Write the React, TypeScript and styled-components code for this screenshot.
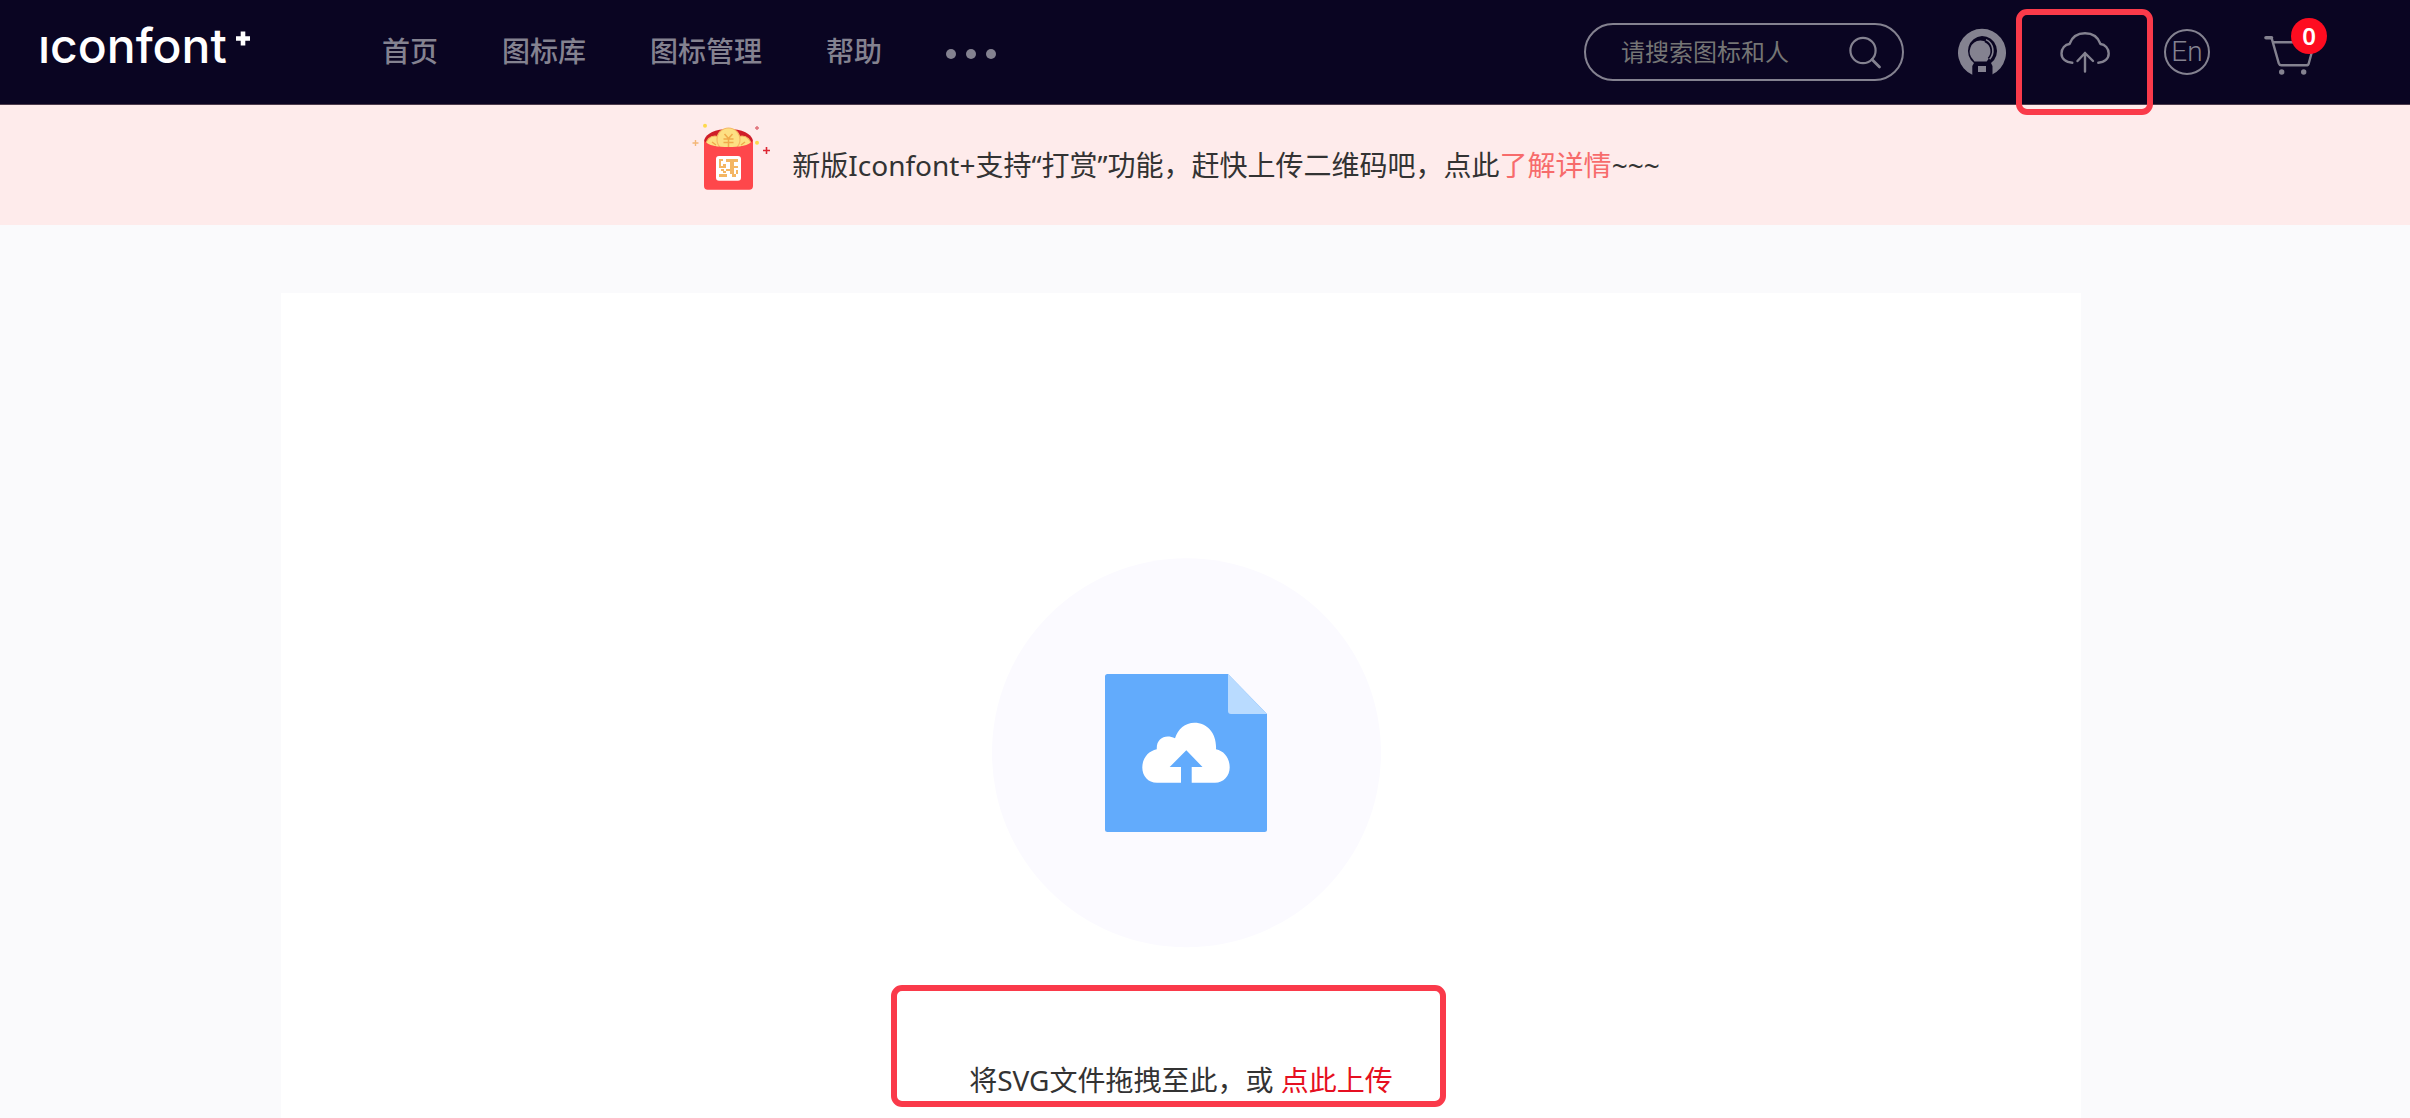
import React from 'react';
import styled, { createGlobalStyle } from 'styled-components';

const GlobalStyle = createGlobalStyle`
  *, *::before, *::after { box-sizing: border-box; }
  body {
    margin: 0;
    background: #fafafc;
    color: #333;
    font-family: "Noto Sans", "Noto Sans CJK SC", sans-serif;
    font-size: 28px;
    line-height: 40px;
  }
  button, input { font-family: inherit; }
  a { text-decoration: none; }
`;

const Page = styled.div`
  display: flex;
  flex-direction: column;
  min-height: 100vh;
`;

const Header = styled.header`
  display: flex;
  align-items: center;
  height: 105px;
  padding: 0 83px 0 38px;
  background: #0a0522;
  border-bottom: 1px solid #4d3c4c;
`;

const Logo = styled.a`
  display: flex;
  align-items: center;
  gap: 8px;
  width: 344px;
  padding-bottom: 12px;
  color: #fff;
  font-family: Inter, sans-serif;
  font-size: 48px;
  font-weight: 500;
  line-height: 60px;
`;

const Nav = styled.nav`
  display: flex;
  align-items: center;
  gap: 64px;
  flex: 1;
  padding-bottom: 2px;
`;

const NavLink = styled.a`
  color: #848290;
  font-weight: 500;
  white-space: nowrap;
`;

const MoreButton = styled.button`
  display: flex;
  gap: 10px;
  padding: 5px 0 0;
  border: 0;
  background: none;
`;

const Dot = styled.span`
  width: 10px;
  height: 10px;
  border-radius: 50%;
  background: #848290;
`;

const Tools = styled.div`
  display: flex;
  align-items: center;
  gap: 54px;
  color: #848290;
`;

const SearchBox = styled.form`
  display: flex;
  align-items: center;
  width: 320px;
  height: 58px;
  padding: 0 20px 0 35px;
  border: 2px solid #848290;
  border-radius: 29px;
`;

const SearchInput = styled.input`
  flex: 1;
  min-width: 0;
  padding: 0;
  border: 0;
  outline: 0;
  background: none;
  color: #fff;
  font-size: 24px;
  line-height: 36px;
  &::placeholder { color: #757575; opacity: 1; }
`;

const IconButton = styled.button`
  display: flex;
  position: relative;
  padding: 0;
  border: 0;
  background: none;
  color: inherit;
`;

const LanguageButton = styled.button`
  display: flex;
  align-items: center;
  justify-content: center;
  width: 46px;
  height: 46px;
  padding: 0;
  border: 2px solid currentColor;
  border-radius: 50%;
  background: none;
  color: inherit;
  font-family: Roboto, sans-serif;
  font-size: 28px;
  font-weight: 300;
  line-height: 28px;
`;

const Badge = styled.span`
  position: absolute;
  top: -10px;
  right: 0;
  width: 36px;
  height: 36px;
  border-radius: 50%;
  background: #fe0c20;
  color: #fff;
  font-size: 24px;
  font-weight: 600;
  line-height: 36px;
  text-align: center;
`;

const Highlight = styled.span<{ $inset: string }>`
  position: absolute;
  inset: ${(p) => p.$inset};
  border: 6px solid #fa3a4a;
  border-radius: 11px;
  pointer-events: none;
`;

const Notice = styled.aside`
  display: flex;
  align-items: center;
  justify-content: center;
  gap: 22px;
  height: 120px;
  padding-right: 58px;
  background: #feebeb;
`;

const NoticeText = styled.p`
  margin: 0;
`;

const NoticeLink = styled.a`
  color: #f76b6b;
`;

const Main = styled.main`
  display: flex;
  flex: 1;
  justify-content: center;
  padding: 68px 48px 0 0;
`;

const UploadCard = styled.section`
  display: flex;
  flex-direction: column;
  align-items: center;
  flex: 1;
  max-width: 1800px;
  padding-top: 265px;
  background: #fff;
`;

const Prompt = styled.p`
  position: relative;
  margin: 112px 0 0;
`;

const UploadLink = styled.button`
  padding: 0;
  border: 0;
  background: none;
  color: #e60f21;
  font-size: inherit;
  line-height: inherit;
`;

const LogoPlus = () => (
  <svg width="16" height="30" viewBox="0 0 16 30" aria-hidden="true">
    <path d="M8 0.5v14M1 7.5h14" stroke="#fff" strokeWidth="4.6" />
  </svg>
);

const SearchIcon = () => (
  <svg width="34" height="34" viewBox="0 0 34 34" fill="none" stroke="#848290" strokeLinecap="round">
    <circle cx="15" cy="15.5" r="12.6" strokeWidth="2.2" />
    <path d="M24 24.5L31.5 32" strokeWidth="2.8" />
  </svg>
);

const AvatarIcon = () => (
  <svg width="48" height="48" viewBox="0 0 48 48">
    <path d="M14.3 46.7A24 24 0 1 1 33.7 46.7Z" fill="currentColor" />
    <path
      d="M24 8a15 15 0 0 1 9 27l1.5 3v10H14.3V38l1.7-3A15 15 0 0 1 24 8Z"
      fill="#0a0522"
    />
    <path d="M22.3 12.6a11 11 0 0 1 8 18.6l-1.6 2.4H16.4L15 31.4a11 11 0 0 1 7.3-18.8Z" fill="currentColor" />
    <path d="M27 13.4c7 3 8 12 3.4 17" fill="none" stroke="#0a0522" strokeWidth="1.6" />
    <path d="M28 11.6c8.3 4 8.6 14 3.6 19.5" fill="none" stroke="currentColor" strokeWidth="1.6" />
    <rect x="20" y="38" width="8" height="6" fill="currentColor" />
  </svg>
);

const CloudIcon = () => (
  <svg width="50" height="48" viewBox="0 0 50 48" fill="none" stroke="currentColor" strokeWidth="2.4" strokeLinecap="round" strokeLinejoin="round">
    <path d="M12.3 34.7C5.5 34.7 1.5 30.5 1.5 25.5c0-5 3.5-9 8-9.5C12 9 18 5.3 25 5.3S38 9 40.5 16c4.5.5 8.2 4.5 8.2 9.5 0 5-4 9.2-10.4 9.2" />
    <path d="M25 25v18.5M17.5 33l7.5-8 8 8" />
  </svg>
);

const CartIcon = () => (
  <svg width="63" height="48" viewBox="0 0 63 48" fill="none" stroke="currentColor" strokeLinecap="round" strokeLinejoin="round">
    <path d="M2 9.7h5.5" strokeWidth="3.6" />
    <path d="M7.5 9.7l7.3 25.7q.6 1.9 2.6 1.9h24.8q2 0 2.600-2L50.5 14.3H9" strokeWidth="2.4" />
    <circle cx="17.7" cy="44" r="2.7" fill="currentColor" stroke="none" />
    <circle cx="39.7" cy="44" r="2.7" fill="currentColor" stroke="none" />
  </svg>
);

const RedPacket = () => (
  <svg width="78" height="88" viewBox="0 0 78 88" aria-hidden="true">
    <g transform="translate(0 1)">
      <path d="M12 20C12 2.5 61 2.5 61 20v8H12Z" fill="#cf1d28" />
      <circle cx="23" cy="23" r="9" fill="#fde083" stroke="#f6b964" strokeWidth="1.2" />
      <circle cx="50" cy="23" r="9" fill="#fde083" stroke="#f6b964" strokeWidth="1.2" />
      <path d="M20 20l4 3M19 25h5M53 20l-4 3M54 25h-5" stroke="#f0aa4b" strokeWidth="1.4" />
      <circle cx="36.5" cy="17.5" r="11.5" fill="#fde083" stroke="#f6b964" strokeWidth="1.2" />
      <path d="M32.5 12l4 4.500 4-4.500M31.5 17h10M31.5 20.500h10M36.5 16.500V25" fill="none" stroke="#f0aa4b" strokeWidth="1.5" />
      <path d="M12 18.5C16 24 26 25 36.5 25S57 24 61 18.5V64a3.7 3.7 0 0 1-3.7 3.7H15.7A3.7 3.7 0 0 1 12 64Z" fill="#fe474b" />
      <rect x="24" y="34" width="25" height="24.7" rx="3" fill="#fff" />
      <path
        d="M27 37h4v2h-4zM27 39h2v5h5v2h-7zM34 37h12v3H34zM38 40h4v12h-4zM31 42h3v2h-3zM42 44h4v2h-4zM29 47h3v2h-3zM34 47h4v2h-4zM31 49h3v2h-3zM27 52h8v3h-8zM40 52h4v3h-4zM44 48h2v4h-2z"
        fill="#f4b663"
      />
      <circle cx="13" cy="3.7" r="2" fill="#fdd94c" />
      <circle cx="65" cy="20.7" r="2" fill="#fdd94c" />
      <path d="M65 4v4M63 6h4" stroke="#e07078" strokeWidth="1.4" />
      <path d="M3.5 18v6M.5 21h6" stroke="#f3b777" strokeWidth="1.4" />
      <path d="M74.5 25v7M71 28.5h7" stroke="#dd2632" strokeWidth="1.6" />
    </g>
  </svg>
);

const UploadIllustration = () => (
  <svg width="400" height="390" viewBox="0 0 400 390" aria-hidden="true">
    <circle cx="205.5" cy="194.7" r="194.5" fill="#fbfaff" />
    <path d="M127 116H247L286 156V271.5a2.5 2.5 0 0 1-2.5 2.5H126.5a2.5 2.5 0 0 1-2.5-2.5V118.5A2.5 2.5 0 0 1 126.5 116Z" fill="#62abfc" />
    <path d="M247 116L286 156H250a3 3 0 0 1-3-3Z" fill="#b9dbff" />
    <path
      d="M176 224.7C167 224.7 161.3 218 161.3 209.5c0-9.5 6-16.5 14.5-18.3C175 180 185 175.5 194 180.3 197 171 204 164.7 213.5 164.7c13 0 22.500 11 21.500 26.500 8.500 1.800 13.700 9 13.700 18.300 0 8.500-6.200 15.200-14.700 15.200H210.7V209h10.8L205.3 192.3 188.7 209H200v15.7Z"
      fill="#fff"
    />
  </svg>
);

const navItems = ['首页', '图标库', '图标管理', '帮助'];

export default function App() {
  return (
    <Page>
      <GlobalStyle />
      <Header>
        <Logo href="#">
          ıconfont
          <LogoPlus />
        </Logo>
        <Nav>
          {navItems.map((item) => (
            <NavLink key={item} href="#">{item}</NavLink>
          ))}
          <MoreButton type="button" aria-label="更多">
            <Dot />
            <Dot />
            <Dot />
          </MoreButton>
        </Nav>
        <Tools>
          <SearchBox>
            <SearchInput type="text" placeholder="请搜索图标和人" aria-label="请搜索图标和人" />
            <IconButton type="submit" aria-label="搜索">
              <SearchIcon />
            </IconButton>
          </SearchBox>
          <IconButton type="button" aria-label="用户">
            <AvatarIcon />
          </IconButton>
          <IconButton type="button" aria-label="上传">
            <CloudIcon />
            <Highlight $inset="-19px -43px -39px -44px" />
          </IconButton>
          <LanguageButton type="button">En</LanguageButton>
          <IconButton type="button" aria-label="购物车">
            <CartIcon />
            <Badge>0</Badge>
          </IconButton>
        </Tools>
      </Header>
      <Notice>
        <RedPacket />
        <NoticeText>
          新版Iconfont+支持“打赏”功能，赶快上传二维码吧，点此<NoticeLink href="#">了解详情</NoticeLink>~~~
        </NoticeText>
      </Notice>
      <Main>
        <UploadCard>
          <UploadIllustration />
          <Prompt>
            将SVG文件拖拽至此，或 <UploadLink type="button">点此上传</UploadLink>
            <Highlight $inset="-75px -53px -7px -78px" />
          </Prompt>
        </UploadCard>
      </Main>
    </Page>
  );
}
